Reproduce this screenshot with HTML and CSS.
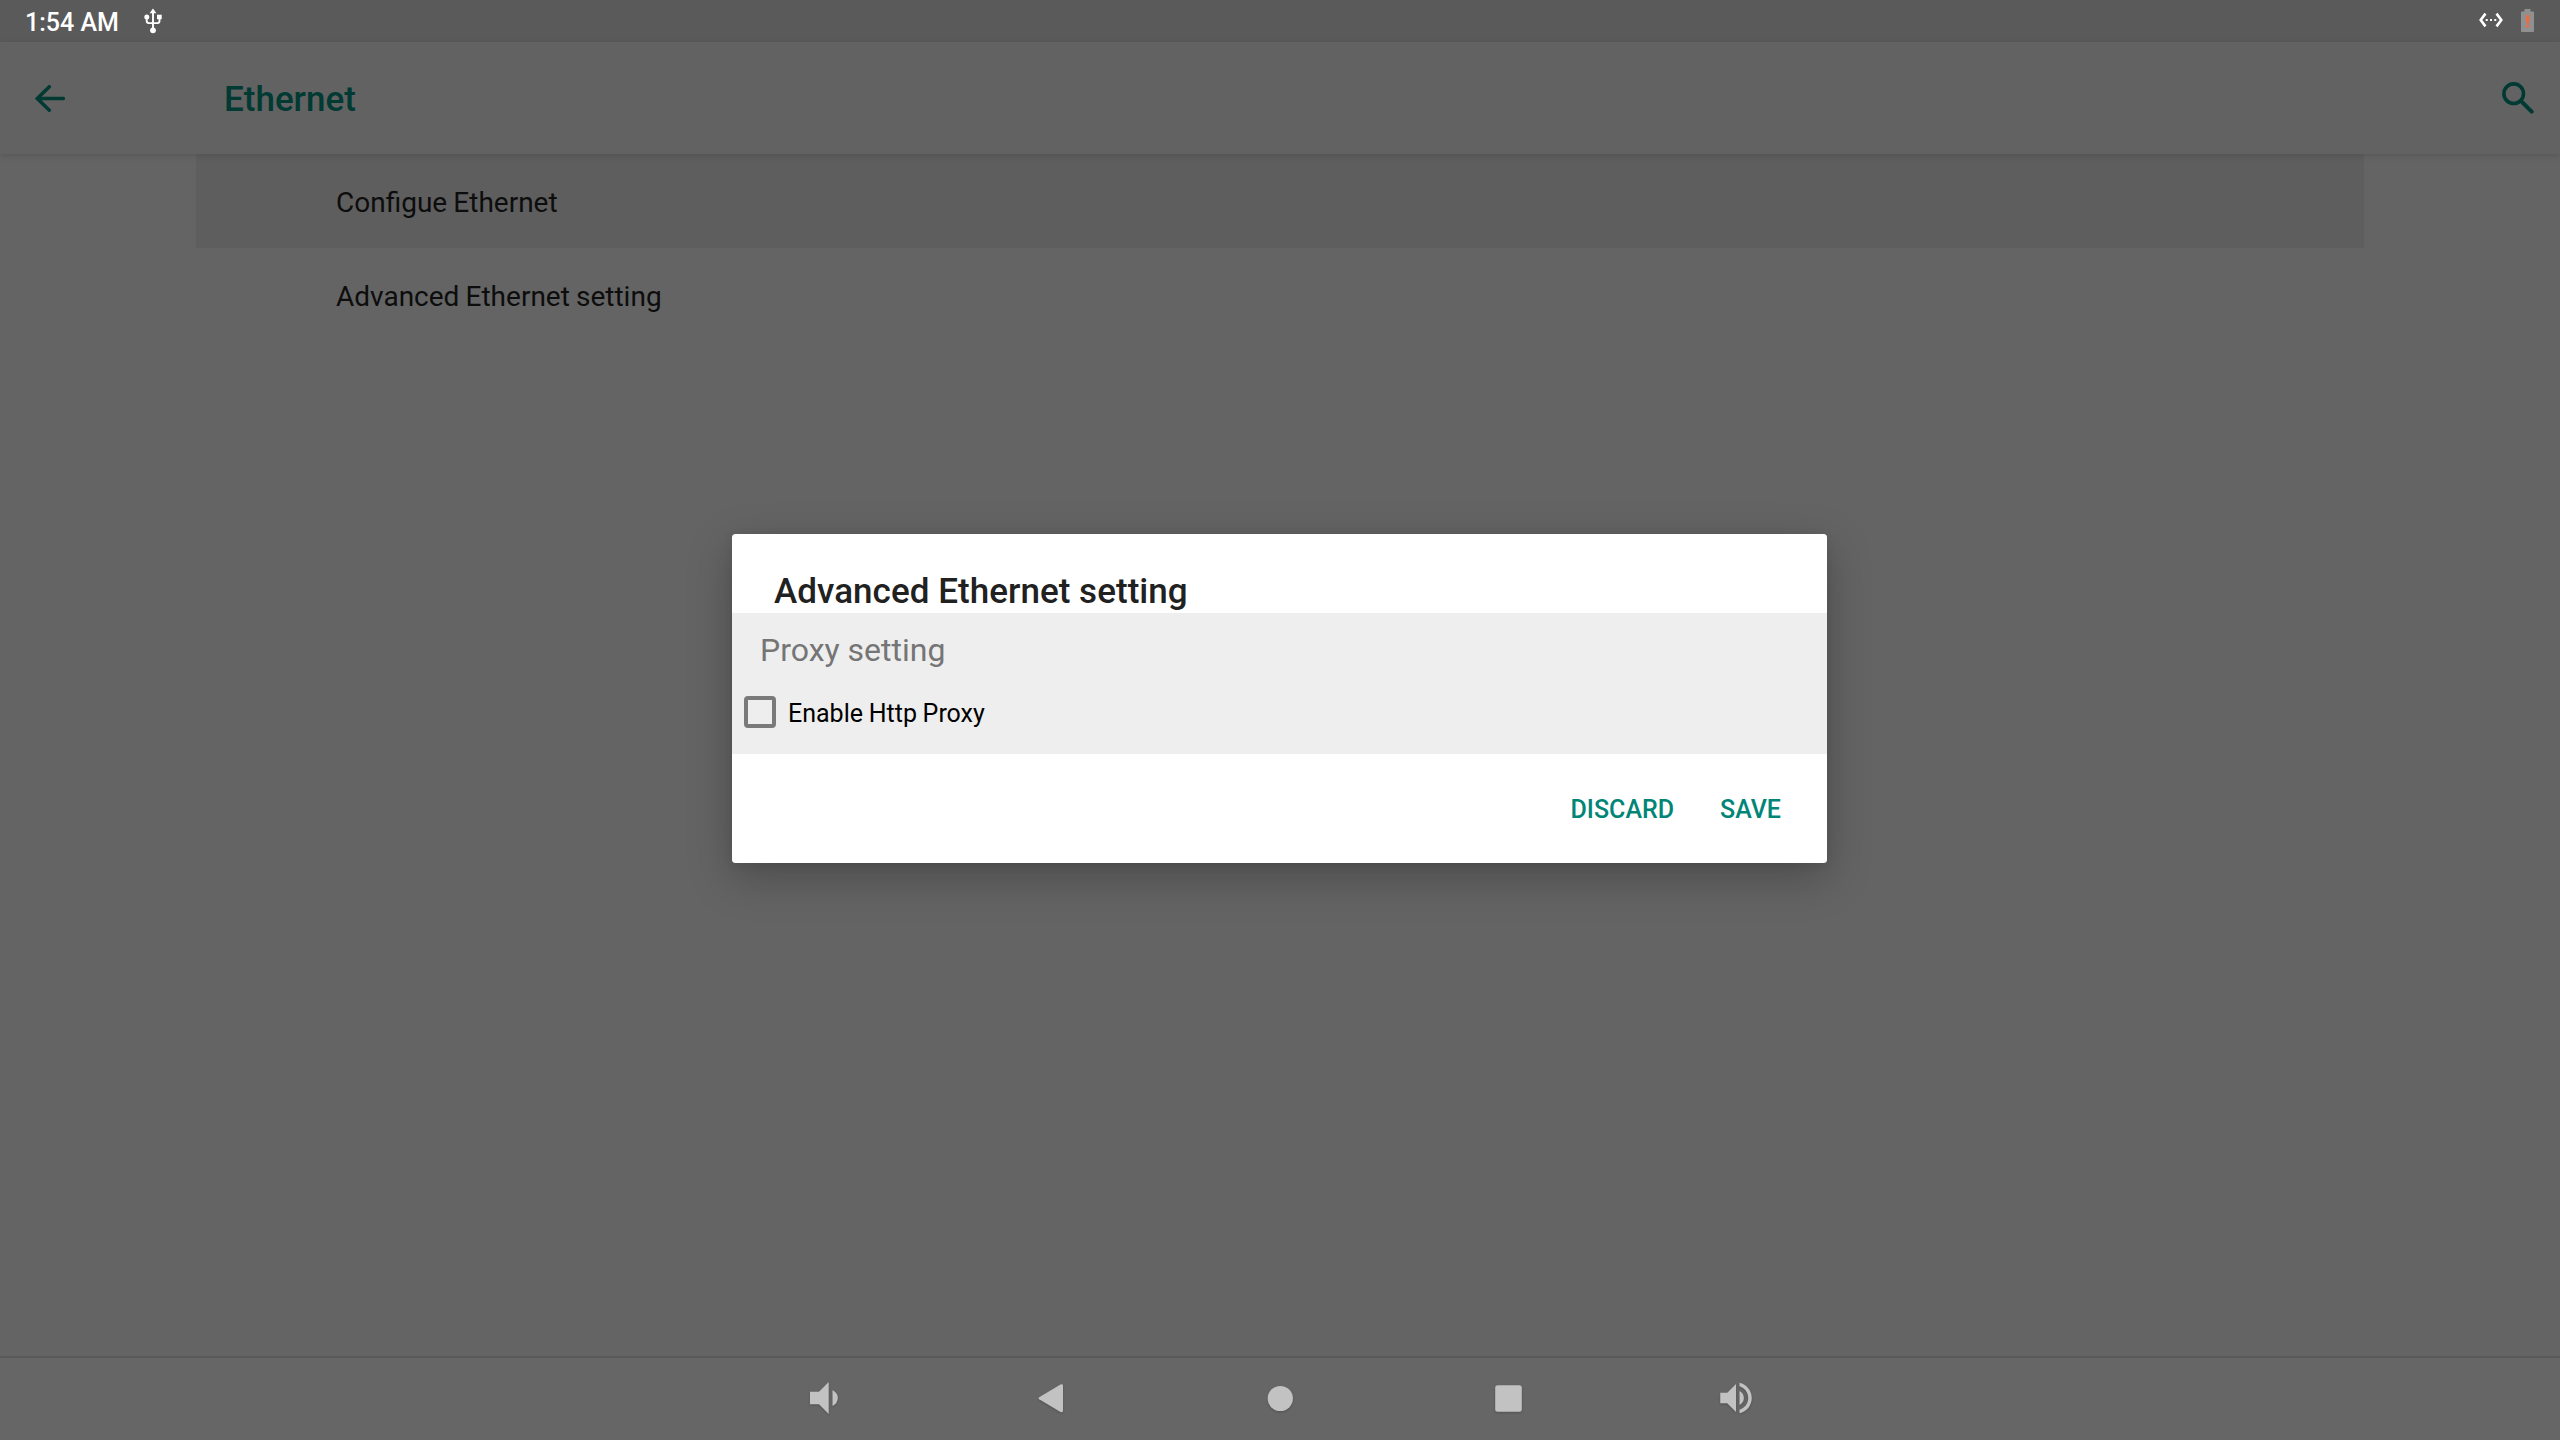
FILE: index.html
```html
<!DOCTYPE html>
<html lang="en">
<head>
<meta charset="utf-8">
<title>Ethernet</title>
<link rel="stylesheet" href="styles.css">
</head>
<body>
<header class="status-bar">
  <span class="clock">1:54 AM</span>
  <svg class="usb" viewBox="0 0 18 26" aria-hidden="true">
    <g fill="none" stroke="#fff" stroke-width="1.9"><path d="M9 4v18M2.700 9v4.100q0 2 2 2H13.500q2 0 2-2V9"/></g>
    <g fill="#fff"><path d="M9 .500l3.400 4.700H5.600z"/><circle cx="2.800" cy="9" r="2.500"/><path d="M13 6.700h4.700v4.500H13z"/><circle cx="9" cy="22.300" r="2.900"/></g>
  </svg>
  <div class="status-end">
    <svg class="ethernet" viewBox="0 0 24 16" aria-hidden="true">
      <path d="M6.500 1.600L1.700 8l4.800 6.400M17.500 1.600l4.800 6.400-4.800 6.400" fill="none" stroke="#fff" stroke-width="2.600"/>
      <path d="M6.700 7h2v2h-2zM11 7h2v2h-2zM15.300 7h2v2h-2z" fill="#fff"/>
    </svg>
    <svg class="battery" viewBox="0 0 13 23" aria-hidden="true">
      <path d="M3.500 0h6v2.500H12q1 0 1 1V22q0 1-1 1H1q-1 0-1-1V3.500q0-1 1-1h2.500z" fill="#909090"/>
      <path d="M5.200 6h3v8.200h-3zM5.200 15.700h3v2.500h-3z" fill="#f4683c"/>
    </svg>
  </div>
</header>
<div class="app-bar">
  <svg class="back" viewBox="0 0 30 27" aria-hidden="true"><path d="M14.300 1.800L2.300 13.500l12 11.700M2.300 13.500h26" fill="none" stroke="#003a32" stroke-width="3.500" stroke-linecap="round"/></svg>
  <h1 class="screen-title">Ethernet</h1>
  <svg class="search" viewBox="0 0 32 32" aria-hidden="true"><circle cx="11.700" cy="11.700" r="9.800" fill="none" stroke="#003a32" stroke-width="3.600"/><path d="M20.500 20.500l9.200 9.200" stroke="#003a32" stroke-width="4" stroke-linecap="round"/></svg>
</div>
<main class="content">
  <ul class="settings">
    <li class="setting selected">Configue Ethernet</li>
    <li class="setting">Advanced Ethernet setting</li>
  </ul>
</main>
<nav class="nav-bar">
  <svg class="nav-icon" viewBox="0 0 42 42"><path d="M7 14.700h9L25.700 5v32L16 27.300H7zM29.500 13q5.300 3 5.300 8t-5.300 8z"/></svg>
  <svg class="nav-icon" viewBox="0 0 42 42"><path d="M8.200 20.300Q6.800 21.300 8.200 22.300L29.500 35Q32 35.800 32 33.800V8.800Q32 6.800 29.500 7.600z"/></svg>
  <svg class="nav-icon" viewBox="0 0 42 42"><circle cx="21.300" cy="21.500" r="12.600"/></svg>
  <svg class="nav-icon" viewBox="0 0 42 42"><rect x="8.200" y="8.200" width="26.600" height="26.600" rx="2.500"/></svg>
  <svg class="nav-icon" viewBox="0 0 24 24"><path d="M3 9v6h4l5 5V4L7 9H3zm13.500 3c0-1.770-1.020-3.290-2.500-4.030v8.050c1.480-.730 2.500-2.250 2.500-4.020zM14 3.230v2.060c2.890.860 5 3.540 5 6.710s-2.110 5.850-5 6.710v2.060c4.010-.910 7-4.490 7-8.770s-2.990-7.860-7-8.770z"/></svg>
</nav>
<section class="dialog" role="dialog" aria-labelledby="dialog-title">
  <h2 class="dialog-title" id="dialog-title">Advanced Ethernet setting</h2>
  <div class="dialog-body">
    <div class="section-label">Proxy setting</div>
    <label class="option"><span class="checkbox"></span><span class="option-text">Enable Http Proxy</span></label>
  </div>
  <div class="actions">
    <button class="action">DISCARD</button>
    <button class="action">SAVE</button>
  </div>
</section>
</body>
</html>
```
FILE: styles.css
```css
* {
  box-sizing: border-box;
}

body {
  position: relative;
  display: flex;
  flex-direction: column;
  width: 2560px;
  height: 1440px;
  margin: 0;
  overflow: hidden;
  background: #646464;
  color: #0d0d0d;
  font-family: Roboto, sans-serif;
}

svg {
  display: block;
  flex: none;
}

.status-bar {
  display: flex;
  align-items: center;
  flex: none;
  height: 42px;
  padding: 0 26px 0 25px;
  background: #5a5a5a;
  color: #fff;
}

.clock {
  width: 119px;
  padding-top: 4px;
  font-size: 25px;
  font-weight: 500;
  line-height: 30px;
}

.usb {
  width: 18px;
  height: 26px;
}

.status-end {
  display: flex;
  align-items: center;
  gap: 18px;
  margin-left: auto;
  padding-bottom: 2px;
}

.ethernet {
  width: 24px;
  height: 16px;
}

.battery {
  width: 13px;
  height: 23px;
}

.app-bar {
  z-index: 1;
  display: flex;
  align-items: center;
  flex: none;
  height: 112px;
  padding: 0 26px 0 35px;
  background: #626262;
  box-shadow: 0 2px 6px rgba(0, 0, 0, 0.12);
}

.back {
  width: 30px;
  height: 27px;
}

.screen-title {
  margin: 3px 0 0 159px;
  color: #003a32;
  font-size: 35px;
  font-weight: 500;
  line-height: 42px;
}

.search {
  width: 32px;
  height: 32px;
  margin-left: auto;
}

.content {
  flex: 1;
  padding: 0 196px;
}

.settings {
  margin: 0;
  padding: 0;
  list-style: none;
}

.setting {
  height: 94px;
  padding: 2px 140px 0;
  font-size: 28px;
  line-height: 94px;
  word-spacing: -0.8px;
}

.selected {
  background: #5e5e5e;
}

.nav-bar {
  display: flex;
  align-items: center;
  justify-content: center;
  flex: none;
  gap: 186px;
  height: 84px;
  padding-bottom: 2px;
  border-top: 2px solid #595959;
  background: #666;
}

.nav-icon {
  width: 42px;
  height: 42px;
  fill: #c2c2c2;
  filter: drop-shadow(0 1px 1px rgba(0, 0, 0, 0.2));
}

.dialog {
  position: absolute;
  z-index: 2;
  top: 534px;
  left: 732px;
  width: 1095px;
  height: 329px;
  overflow: hidden;
  border-radius: 3.5px;
  background: #fff;
  box-shadow: 0 14px 44px rgba(0, 0, 0, 0.25), 0 2px 10px rgba(0, 0, 0, 0.08);
}

.dialog-title {
  height: 79px;
  margin: 0;
  padding: 37px 42px 0;
  color: #212121;
  font-size: 35px;
  font-weight: 500;
  letter-spacing: 0.04px;
  line-height: 41px;
}

.dialog-body {
  height: 141px;
  padding-top: 18px;
  background: #eee;
}

.section-label {
  padding-left: 28px;
  color: #757575;
  font-size: 32px;
  line-height: 38px;
}

.option {
  display: flex;
  align-items: center;
  gap: 12px;
  height: 32px;
  margin-top: 27px;
  padding-left: 12px;
  color: #000;
  font-size: 25px;
}

.option-text {
  padding-top: 2px;
  word-spacing: -0.5px;
}

.checkbox {
  width: 32px;
  height: 32px;
  border: 4px solid #7a7a7a;
  border-radius: 4px;
}

.actions {
  display: flex;
  align-items: center;
  justify-content: flex-end;
  gap: 46px;
  height: 109px;
  padding-right: 46px;
}

.action {
  padding: 3px 0 0;
  border: 0;
  background: none;
  color: #008577;
  font: 500 25px/30px Roboto, sans-serif;
}
```
